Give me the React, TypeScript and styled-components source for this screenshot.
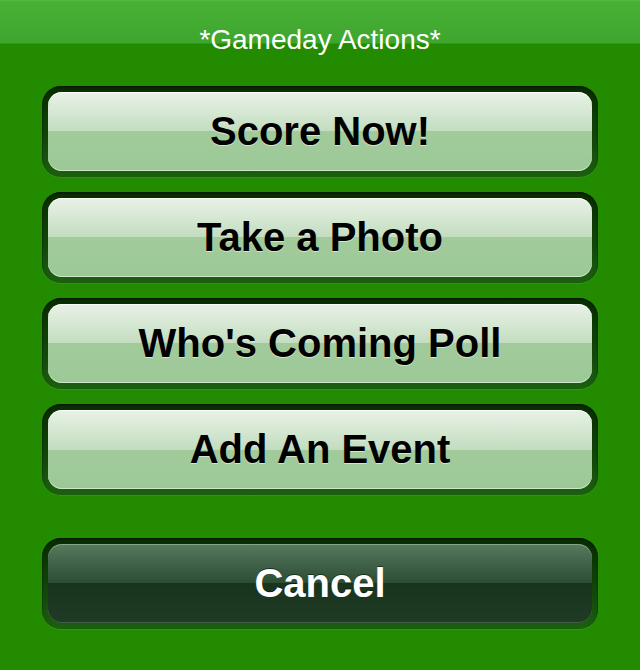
import React from "react";
import styled, { createGlobalStyle } from "styled-components";

const GlobalStyle = createGlobalStyle`
  html, body { margin: 0; padding: 0; }
  body {
    background: #228b00;
    font-family: "Liberation Sans", Arial, Helvetica, sans-serif;
  }
`;

const Page = styled.div`
  width: 640px;
  min-height: 670px;
  box-sizing: border-box;
  padding-top: 24px;
  background:
    linear-gradient(
      to bottom,
      #52bd3f 0px,
      #48b035 2px,
      #3ea62d 43px,
      #228b00 44px,
      #228b00 100%
    );
`;

const Title = styled.h1`
  margin: 0 0 30px;
  height: 32px;
  line-height: 32px;
  text-align: center;
  font-weight: normal;
  font-size: 28px;
  color: #ffffff;
`;

const ActionList = styled.div`
  display: flex;
  flex-direction: column;
  gap: 15px;
  padding: 0 42px;
`;

const Frame = styled.div<{ $spaced?: boolean }>`
  padding: 6px 6px 6px;
  margin-top: ${(p) => (p.$spaced ? "28px" : "0")};
  border-radius: 19px;
  background: linear-gradient(to bottom, #082c00 0%, #12470a 60%, #1c6010 100%);
  box-shadow: inset 0 1px 2px rgba(0, 0, 0, 0.6), 0 1px 0 rgba(60, 170, 40, 0.4);
`;

const ActionButton = styled.button<{ $variant?: "light" | "dark" }>`
  display: flex;
  align-items: center;
  justify-content: center;
  width: 100%;
  height: 79px;
  border: none;
  border-radius: 14px;
  font-family: "Liberation Sans", Arial, Helvetica, sans-serif;
  font-weight: bold;
  font-size: 40px;
  cursor: pointer;
  padding: 0 0 0;
  color: ${(p) => (p.$variant === "dark" ? "#ffffff" : "#000000")};
  text-shadow: ${(p) =>
    p.$variant === "dark"
      ? "0 -1px 0 rgba(0,0,0,0.5)"
      : "0 1px 0 rgba(255,255,255,0.55)"};
  background: ${(p) =>
    p.$variant === "dark"
      ? "linear-gradient(to bottom, #587a5c 0%, #41624a 25%, #2c4c33 50%, #18341d 50%, #1f3b25 100%)"
      : "linear-gradient(to bottom, #e8f1e6 0%, #d6e8d3 25%, #c3dcbf 50%, #a2cb9c 50%, #9cc896 100%)"};
  box-shadow: ${(p) =>
    p.$variant === "dark"
      ? "inset 0 1px 0 rgba(170,200,170,0.55), inset 0 -1px 0 rgba(120,160,120,0.35)"
      : "inset 0 1px 0 rgba(255,255,255,0.8), inset 0 -1px 0 rgba(210,235,205,0.9)"};
`;

const actions = ["Score Now!", "Take a Photo", "Who's Coming Poll", "Add An Event"];

export default function App() {
  return (
    <>
      <GlobalStyle />
      <Page>
        <Title>*Gameday Actions*</Title>
        <ActionList>
          {actions.map((a) => (
            <Frame key={a}>
              <ActionButton $variant="light">{a}</ActionButton>
            </Frame>
          ))}
          <Frame $spaced>
            <ActionButton $variant="dark">Cancel</ActionButton>
          </Frame>
        </ActionList>
      </Page>
    </>
  );
}
